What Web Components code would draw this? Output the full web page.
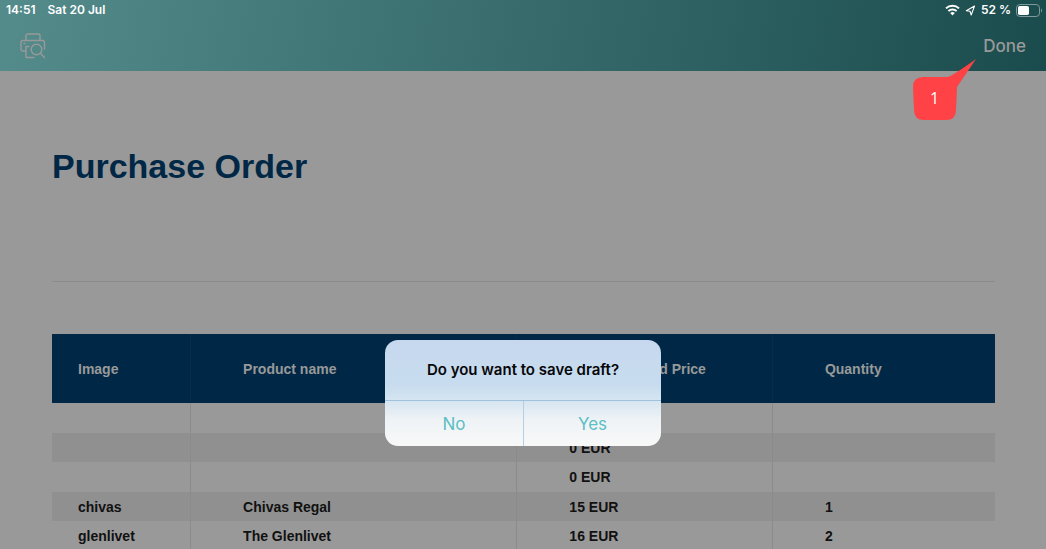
<!DOCTYPE html>
<html lang="en">
<head>
<meta charset="utf-8">
<title>Purchase Order</title>
<style>
body{margin:0;height:100vh;overflow:hidden;background:#999;font-family:Inter,"Liberation Sans",sans-serif}
</style>
</head>
<body>
<order-app></order-app>
<script>
const define = (name, html) => customElements.define(name, class extends HTMLElement {
  constructor() {
    super();
    const t = document.createElement('template');
    t.innerHTML = html;
    this.attachShadow({mode: 'open'}).append(t.content.cloneNode(true));
  }
});

define('status-bar', `
<style>
:host{display:flex;justify-content:space-between;align-items:center;height:20px;padding:0 4px 0 6px;color:#fff;font-size:12px;line-height:20px;font-weight:600}
div{display:flex;align-items:center}
.left{gap:12px}.right{gap:5px}
svg{display:block}
</style>
<div class="left"><span>14:51</span><span>Sat 20 Jul</span></div>
<div class="right">
<svg width="15" height="12" viewBox="0 0 15 12" fill="none" stroke="#fff" stroke-width="2"><path d="M1 4.4a9.2 9.2 0 0 1 13 0M3.4 7.1a5.8 5.8 0 0 1 8.2 0"/><path d="M7.5 11.4 5.2 9.1a3.3 3.3 0 0 1 4.6 0z" fill="#fff" stroke="none"/></svg>
<svg width="11" height="11" viewBox="0 0 11 11" fill="none" stroke="#fff" stroke-width="1.1" stroke-linejoin="round"><path d="M9.500 1 1.300 5.700 5 6.200 6.200 10z"/></svg>
<span>52 %</span>
<svg width="26" height="13" viewBox="0 0 26 13"><rect x=".5" y=".5" width="23" height="12" rx="3.4" fill="none" stroke="#7f9a9c"/><rect x="2" y="2" width="11" height="9" rx="1.8" fill="#fff"/><path d="M25 4.5q1 .5 1 2t-1 2z" fill="#7f9a9c"/></svg>
</div>`);

define('nav-bar', `
<style>
:host{display:flex;justify-content:space-between;align-items:center;height:51px;padding:0 20px}
button{all:unset;display:block;color:#999;font-size:17px;line-height:24px;font-weight:500}
svg{display:block}
</style>
<button aria-label="Print preview"><svg width="26" height="26" viewBox="0 0 26 26" fill="none" stroke="#999" stroke-width="1.4" stroke-linecap="round" stroke-linejoin="round"><path d="M6 7V2.5Q6 1 7.500 1h11Q20 1 20 2.500V7M5 18H3Q1 18 1 16V9.500Q1 7.500 3 7.500H22.500Q24.500 7.500 24.500 9.500V16M9 13.500H6V24.500H14M4 10.500h1"/><circle cx="16.500" cy="16.500" r="5.300"/><path d="m20.500 20.500 4 4"/></svg></button>
<button>Done</button>`);

define('order-table', `
<style>
:host{display:block;font-family:"Liberation Sans",Arial,sans-serif}
table{width:100%;table-layout:fixed;border-collapse:separate;border-spacing:0;font-size:14px;line-height:20px;font-weight:700;color:#111}
.c1{width:14.75%}.c2{width:34.6%}.c3{width:27.1%}
th,td{box-sizing:border-box;text-align:left;padding:0 0 0 52px;white-space:nowrap}
th:first-child,td:first-child{padding-left:26px}
th{height:69px;background:#002846;color:#999;border-right:1px solid #062d4a}
th.price{text-align:right;padding:0 66px 0 0}
td{height:30px;border-right:1px solid #8b8b8b}
th:last-child,td:last-child{border-right:0}
tbody tr:nth-child(even) td{height:29px;background:#909090}
</style>
<table>
<colgroup><col class="c1"><col class="c2"><col class="c3"><col></colgroup>
<thead><tr><th>Image</th><th>Product name</th><th class="price">d Price</th><th>Quantity</th></tr></thead>
<tbody>
<tr><td></td><td></td><td></td><td></td></tr>
<tr><td></td><td></td><td>0 EUR</td><td></td></tr>
<tr><td></td><td></td><td>0 EUR</td><td></td></tr>
<tr><td>chivas</td><td>Chivas Regal</td><td>15 EUR</td><td>1</td></tr>
<tr><td>glenlivet</td><td>The Glenlivet</td><td>16 EUR</td><td>2</td></tr>
</tbody>
</table>`);

define('confirm-dialog', `
<style>
:host{display:block;box-sizing:border-box;width:276px;border-radius:13px;overflow:hidden;background:linear-gradient(#c7d8ee 0,#c7dcee 45px,#d7e6f1 62px,#eff3f6 80px,#f8f8f8 100%)}
h2{margin:0;padding:20px 16px;font-size:15px;line-height:20px;font-weight:600;color:#050708;text-align:center}
div{display:grid;grid-template-columns:1fr 1fr;border-top:1px solid #9fc3de}
::slotted(button){appearance:none;border:0;margin:0;padding:0;background:none;height:45px;font:400 17px/24px Inter,sans-serif;color:#5bbfc4}
::slotted(button:last-child){border-left:1px solid #b4cfe1}
</style>
<h2><slot name="title"></slot></h2><div><slot></slot></div>`);

define('callout-badge', `
<style>
:host{display:block;position:relative;width:64px;height:61px}
svg{display:block}
span{position:absolute;left:0;bottom:0;width:43px;text-align:center;color:#fff;font:400 16px/43px "Open Sans",sans-serif}
</style>
<svg width="64" height="61" viewBox="0 0 64 61"><path fill="#ff4245" d="M10 18H34Q38 18 63 0L44 28V30L43 51Q43 61 33 61H11Q1 61 1 51L0 28Q0 18 10 18Z"/></svg>
<span><slot></slot></span>`);

define('order-app', `
<style>
:host{display:block;position:relative;min-height:100vh}
header{background:linear-gradient(100deg,#548b8b,#1b4c4d)}
main{padding:0 51px 0 52px}
h1{margin:0;padding:74px 0 94px;font:700 34px/42px "Liberation Sans",Arial,sans-serif;color:#002846}
hr{margin:0 0 52px;border:0;height:1px;background:#8b8b8b}
.modal{position:absolute;inset:0;display:flex;justify-content:center;align-items:flex-start;padding-top:340px}
callout-badge{position:absolute;top:59px;right:69px}
</style>
<header><status-bar></status-bar><nav-bar></nav-bar></header>
<main><h1>Purchase Order</h1><hr><order-table></order-table></main>
<div class="modal"><confirm-dialog role="dialog" aria-label="Save draft"><span slot="title">Do you want to save draft?</span><button>No</button><button>Yes</button></confirm-dialog></div>
<callout-badge>1</callout-badge>`);
</script>
</body>
</html>
